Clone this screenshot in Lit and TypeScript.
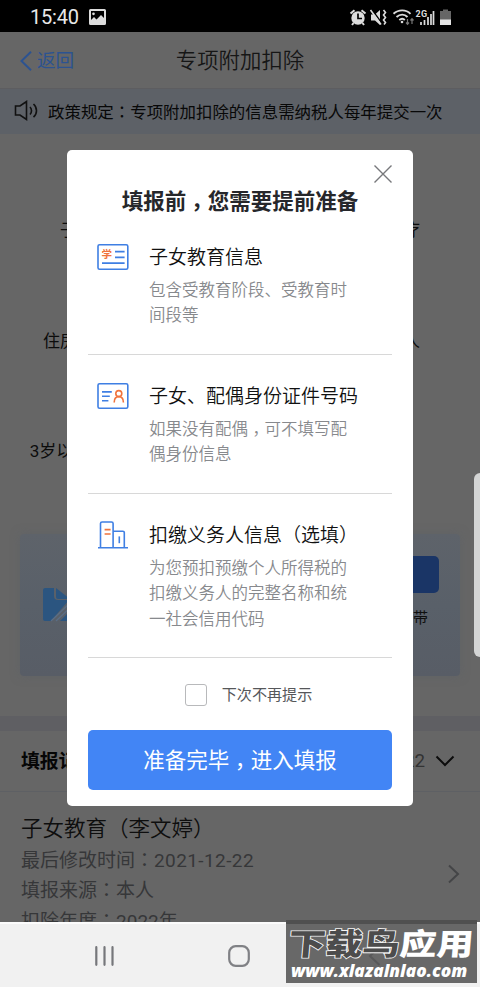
import { LitElement, html, css, svg } from "lit";
import { customElement } from "lit/decorators.js";

const comma = html`<span class="comma">，</span>`;
const colon = html`<span class="colon">：</span>`;

const eduIcon = svg`
  <svg class="item-icon" width="32" height="32" viewBox="0 0 32 32" fill="none" stroke="#3f7fe3" stroke-width="1.6">
    <rect x="1" y="3.7" width="29.8" height="24.6" rx="1.6"/>
    <path d="M18 10.6h9.6M18 16.4h9.6M5 22.1h22.6"/>
    <text x="4.6" y="17.4" font-size="10.5" font-weight="700" fill="#f0733d" stroke="none">学</text>
  </svg>`;

const idIcon = svg`
  <svg class="item-icon" width="32" height="32" viewBox="0 0 32 32" fill="none" stroke="#3f7fe3" stroke-width="1.6">
    <rect x="1" y="3.7" width="29.8" height="24.6" rx="1.6"/>
    <path d="M5 11.9h9.8M5 16.3h7.8M5 20.7h6.4"/>
    <g stroke="#f0733d"><circle cx="21.8" cy="13.6" r="3"/><path d="M17.2 22.4c0-3.600 1.400-5.800 4.600-5.800s4.600 2.200 4.600 5.800"/></g>
  </svg>`;

const orgIcon = svg`
  <svg class="item-icon" width="32" height="32" viewBox="0 0 32 32" fill="none" stroke="#3f7fe3" stroke-width="1.6">
    <path d="M1 28.8h30M3.500 28.8V4.600a1.600 1.600 0 0 1 1.600-1.600h9.400a1.600 1.600 0 0 1 1.600 1.600v24.200M16.100 12.200h9.800a1.400 1.400 0 0 1 1.400 1.400v15.200"/>
    <path d="M22.300 17.400v6.800"/>
    <path stroke="#f0733d" d="M7.600 10.600h6M7.600 15h6"/>
  </svg>`;

const items = [
  { icon: eduIcon, title: "子女教育信息", desc: html`包含受教育阶段、受教育时间段等` },
  { icon: idIcon, title: "子女、配偶身份证件号码", desc: html`如果没有配偶${comma}可不填写配偶身份信息` },
  { icon: orgIcon, title: "扣缴义务人信息（选填）", desc: html`为您预扣预缴个人所得税的扣缴义务人的完整名称和统一社会信用代码` },
];

@customElement("app-root")
export class AppRoot extends LitElement {
  static styles = css`
    :host { display: block; width: 480px; height: 987px; overflow: hidden; position: relative;
      font-family: Roboto, "Noto Sans CJK SC", sans-serif; background: #666; color: #101010; }
    * { box-sizing: border-box; }
    svg { display: block; flex: none; }
    .screen { display: flex; flex-direction: column; height: 987px; }
    .comma { position: relative; top: 0.3em; font-family: "Noto Sans CJK TC", sans-serif; line-height: 0; }
    .colon { font-family: "Noto Sans CJK JP", sans-serif; line-height: 0; }

    .status { height: 32px; background: #000; color: #e8e8e8; display: flex; align-items: center;
      padding: 2px 28px 0 30px; font-size: 20px; letter-spacing: -0.2px; flex: none; }
    .status .pic { margin-left: 10px; margin-right: auto; }

    .header { height: 57px; flex: none; display: grid; grid-template-columns: 1fr auto 1fr; align-items: center;
      padding: 1px 20px 0; border-bottom: 1px solid #5d5d60; }
    .back { display: flex; align-items: center; gap: 5px; color: #2c5391; font-size: 18.6px; line-height: 28px; }
    .name { font-size: 21.4px; line-height: 30px; color: #161616; font-weight: 350; }

    .notice { height: 45px; flex: none; background: #5d6167; display: flex; align-items: center; gap: 10px;
      padding: 0 0 2px 14px; font-size: 16.45px; color: #080808; white-space: nowrap; }

    .page { flex: 1; min-height: 0; overflow: hidden; display: flex; flex-direction: column; }
    .cats { display: grid; grid-template-columns: repeat(3, 146px); grid-auto-rows: 110.5px; padding: 0 21px;
      height: 400px; flex: none; text-align: center; font-size: 17px; color: #0c0c0c; }
    .cat { padding-top: 83px; line-height: 26px; white-space: nowrap; }
    .card { height: 142px; margin: 0 20px 40px; flex: none; border-radius: 4px; display: flex; justify-content: space-between;
      padding: 22px 21px 0 22px; background: linear-gradient(#5e636a, #596069 50%, #585d66);
      box-shadow: 0 0 10px rgba(90, 95, 104, 0.5); }
    .doc { margin-top: 32px; }
    .fill { display: flex; flex-direction: column; align-items: flex-end; }
    .fill-btn { width: 150px; height: 37px; border-radius: 5px; background: #1a3566; }
    .fill-note { padding: 13px 11px 0 0; font-size: 15px; line-height: 24px; }
    .band { height: 15px; flex: none; background: #5f5f63; }
    .rec-head { height: 61px; flex: none; border-bottom: 1px solid #5e6064; padding: 0 25px 3px 21px; display: flex;
      align-items: center; justify-content: space-between; font-size: 18.8px; font-weight: 700; color: #060606; }
    .year { display: flex; align-items: center; gap: 10px; font-weight: 400; color: #333; padding-top: 2px; }
    .record { padding: 21px 20px 0 21px; display: flex; justify-content: space-between; flex: none; color: #363739;
      font-size: 19px; line-height: 30.4px; white-space: nowrap; }
    .record > div > div { height: 30.4px; }
    .record .rec-name { font-size: 21.5px; line-height: 32px; height: 33px; color: #0e0e0e; font-weight: 350; }
    .num { letter-spacing: 0.4px; }
    .arrow { margin-top: 51px; }

    .nav { height: 65px; flex: none; background: #f1f1f1; border-top: 2px solid #fcfcfc; display: flex;
      align-items: center; padding: 1px 0 0 94px; gap: 113px; }
    .nav svg:last-child { margin-left: 5px; }

    .handle { position: absolute; right: 0; top: 473px; width: 6px; height: 184px; background: #d4d5d5; border-radius: 6px 0 0 6px; }

    .modal { position: absolute; left: 67px; top: 150px; width: 346px; height: 656px; background: #fff; border-radius: 5px;
      padding: 14px 21px 0; display: flex; flex-direction: column; }
    .close { align-self: flex-end; }
    .modal-title { height: 30px; margin: 3px 0 24px; font-size: 21.5px; line-height: 30px; font-weight: 700; text-align: center; color: #26272b; white-space: nowrap; }
    .item { display: flex; gap: 20px; padding: 0 0 0 9px; height: 139px; color: #1c1c1e; flex: none; }
    .item-title { margin-top: 2px; font-size: 19px; line-height: 30px; white-space: nowrap; font-weight: 350; color: #111; }
    .item-desc { width: 199px; margin-top: 5px; font-size: 16.5px; line-height: 25.3px; color: #87898d; word-break: break-all; font-weight: 350; }
    .rule { height: 1px; margin: -26px 0 25px; background: #d8d8d8; flex: none; }
    .item-icon { font-family: "Noto Sans CJK SC", sans-serif; }
    .item.last { height: 164px; }
    .agree { display: flex; justify-content: center; align-items: center; gap: 15px; font-size: 15.1px; line-height: 24px;
      color: #56575a; padding-left: 17px; }
    .box { width: 22px; height: 22px; border: 1.5px solid #b8b9bb; border-radius: 3px; }
    .go { height: 60px; border: 0; border-radius: 5px; background: #4285f5; color: #fff; font: inherit; font-size: 21.5px;
      margin-top: 23px; padding: 0 0 4px; flex: none; white-space: nowrap; }

    .mark { position: absolute; left: 286px; top: 920px; width: 191px; height: 63px; background: rgba(82, 82, 82, 0.86);
      border-top: 4px solid #505050; white-space: nowrap; overflow: hidden; color: #fff; }
    .mark-name { font: 900 37px/40px "Noto Sans CJK SC", sans-serif; padding-left: 3px; height: 35px; margin-top: -2px;
      transform: scaleY(0.82) skewX(-4deg); }
    .mark-name .dark { color: #4c4c4c; -webkit-text-stroke: 2px #f5f5f5; paint-order: stroke fill; }
    .mark-url { font: italic 800 17.3px/22px "Open Sans", sans-serif; letter-spacing: 0; padding-left: 5px; margin-top: 3px;
      display: flex; }
  `;

  render() {
    return html`
      <div class="screen">
        <div class="status">
          <span>15:40</span>
          <svg class="pic" width="17" height="16" viewBox="0 0 17 16"><path fill="#dcdcdc" fill-rule="evenodd" d="M1.5 0h14A1.5 1.5 0 0 1 17 1.5v13a1.5 1.5 0 0 1-1.500 1.500h-14A1.500 1.500 0 0 1 0 14.500v-13A1.500 1.500 0 0 1 1.500 0zM2 2v9l3-3 2.500 2.500L12 6l3 3V2zM4.500 3.500a1.300 1.300 0 1 1 0 2.700 1.300 1.300 0 0 1 0-2.700z"/></svg>
          <svg width="104" height="20" viewBox="348 6 104 20" fill="none" stroke="#dcdcdc">
            <circle cx="358" cy="17" r="6.700" fill="#dcdcdc" stroke="none"/>
            <path stroke="#000" stroke-width="1.700" d="M358 12.500v5h4"/>
            <path stroke-width="2" d="M350.500 12.500l4-3.300M365.500 12.500l-4-3.300M353.500 22l-1.500 2M362.500 22l1.500 2"/>
            <path fill="#dcdcdc" stroke="none" d="M371 13.500h4l5-4.500v15l-5-4.500h-4z"/>
            <path stroke="#000" stroke-width="1.500" d="M371.500 8l10.500 14.500"/>
            <path stroke-width="1.600" d="M370.500 9l10.500 14.500M383.500 9l2 2.500-2 2.500 2 2.500-2 2.500 2 2.500-1.500 2"/>
            <path stroke-width="1.900" d="M393.500 12.800c5-4.600 12.500-4.600 17 0M396.500 16c3.500-3.200 8-3.200 11 0M399.300 19c1.800-1.500 4-1.500 5.500 0"/>
            <circle cx="402" cy="21" r="1.300" fill="#dcdcdc" stroke="none"/>
            <path stroke="#777" stroke-width="1.200" d="M407.500 18v5m-1.500-1.500l1.500 1.800 1.500-1.800M412 23v-5m-1.500 1.500l1.500-1.800 1.500 1.800"/>
            <text x="415.500" y="15.500" font-size="9" font-weight="700" fill="#dcdcdc" stroke="none" textLength="11.500">2G</text>
            <path stroke-width="1.700" d="M421 24v-3M424.500 24v-5M428 24v-8M431 24v-11M433.500 24V10"/>
            <path fill="#666" stroke="none" d="M440 10h3V8.500h5V10h3v9h-11z"/>
            <path fill="#e4e4e4" stroke="none" d="M440 18.500h11V24h-11z"/>
          </svg>
        </div>
        <div class="header">
          <div class="back">
            <svg width="12" height="20" viewBox="0 0 12 20" fill="none" stroke="#2c5391" stroke-width="2"><path d="M11 .8L1.500 10 11 19.200"/></svg>
            <span>返回</span>
          </div>
          <div class="name">专项附加扣除</div>
        </div>
        <div class="notice">
          <svg width="24" height="22" viewBox="0 0 24 22" fill="none" stroke="#111" stroke-width="1.600">
            <path d="M1.500 6h4.500l6.500-4.500v18L6 15H1.500zM16 7c2 2 2 5.500 0 7.500M19.500 4c4 3.800 4 9.500 0 13.200"/>
          </svg>
          <span>政策规定${colon}专项附加扣除的信息需纳税人每年提交一次</span>
        </div>
        <div class="page">
          <div class="cats">
            ${["子女教育", "继续教育", "大病医疗", "住房贷款利息", "住房租金", "赡养老人", "3岁以下婴幼照护"].map((c) => html`<div class="cat">${c}</div>`)}
          </div>
          <div class="card">
            <svg class="doc" width="40" height="34" viewBox="0 0 40 34">
              <path fill="#2b5580" d="M3 0h9v8a4 4 0 0 0 4 4h11L9 33H3a2 2 0 0 1-2-2V2a2 2 0 0 1 2-2zM14 0l14 11H16a2 2 0 0 1-2-2z"/>
              <path stroke="#5a6e86" stroke-width="1.200" fill="none" d="M9 33L28 15M14 33L31 17"/>
              <path fill="#2b5580" d="M18 33L32 19v14z"/>
            </svg>
            <div class="fill"><div class="fill-btn"></div><div class="fill-note">一键带</div></div>
          </div>
          <div class="band"></div>
          <div class="rec-head">
            <span>填报记录</span>
            <span class="year">2022
              <svg width="20" height="12" viewBox="0 0 20 12" fill="none" stroke="#0c0c0c" stroke-width="2"><path d="M1.500 1.500L10 10l8.500-8.500"/></svg>
            </span>
          </div>
          <div class="record">
            <div>
              <div class="rec-name">子女教育（李文婷）</div>
              <div>最后修改时间${colon}<span class="num">2021-12-22</span></div>
              <div>填报来源${colon}本人</div>
              <div>扣除年度${colon}2022年</div>
            </div>
            <svg class="arrow" width="12" height="20" viewBox="0 0 12 20" fill="none" stroke="#444547" stroke-width="2"><path d="M1 1.500L10 10l-9 8.500"/></svg>
          </div>
        </div>
        <div class="nav">
          <svg width="21" height="20" viewBox="0 0 21 20" stroke="#76777b" stroke-width="2.200" stroke-linecap="round"><path d="M2.300 1.200v17.600M10.500 1.200v17.600M18.500 1.200v17.600"/></svg>
          <svg width="22" height="22" viewBox="0 0 22 22" fill="none" stroke="#808185" stroke-width="2.200"><rect x="1.200" y="1.200" width="19.600" height="19.600" rx="6.500"/></svg>
          <svg width="14" height="20" viewBox="0 0 14 20" fill="none" stroke="#808185" stroke-width="2.200"><path d="M11.500 1L2 10l9.500 9"/></svg>
        </div>
      </div>
      <div class="handle"></div>
      <div class="modal">
        <svg class="close" width="18" height="20" viewBox="0 0 18 20" fill="none" stroke="#77787b" stroke-width="1.400"><path d="M.5 1.500l17 17M17.500 1.500l-17 17"/></svg>
        <div class="modal-title">填报前${comma}您需要提前准备</div>
        ${items.map((it, i) => html`
          <div class="item ${i === 2 ? "last" : ""}">
            ${it.icon}
            <div><div class="item-title">${it.title}</div><div class="item-desc">${it.desc}</div></div>
          </div>
          <div class="rule"></div>`)}
        <div class="agree"><span class="box"></span><span>下次不再提示</span></div>
        <button class="go">准备完毕${comma}进入填报</button>
      </div>
      <div class="mark">
        <div class="mark-name"><span class="dark">下载鸟</span>应用</div>
        <div class="mark-url">www.xlazalnlao.com</div>
      </div>
    `;
  }
}
